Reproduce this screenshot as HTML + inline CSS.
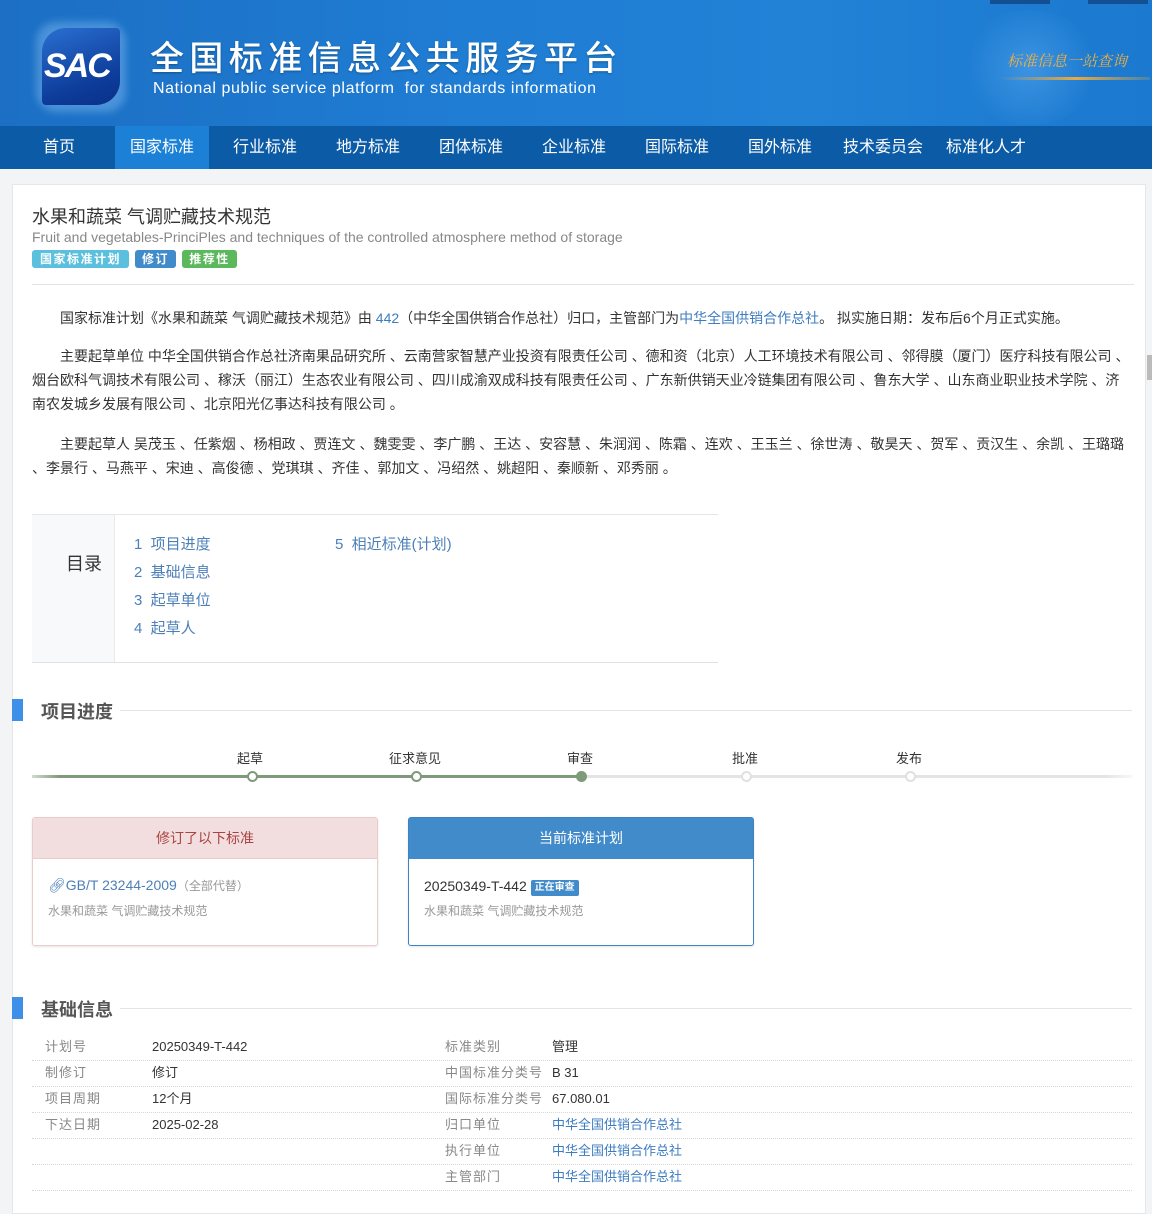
<!DOCTYPE html>
<html><head><meta charset="utf-8">
<style>
*{margin:0;padding:0;box-sizing:border-box}
body{width:1152px;height:1208px;overflow:hidden;background:#f3f4f5;font-family:"Liberation Sans","Noto Sans CJK SC",sans-serif;position:relative;color:#333}
.a{position:absolute;white-space:nowrap}
#hdr{position:absolute;left:0;top:0;width:1152px;height:126px;background:linear-gradient(90deg,#1c6fc4 0%,#1f7dd3 40%,#2182d6 70%,#1b79cf 100%)}
#nav{position:absolute;left:0;top:126px;width:1152px;height:43px;background:#0c5ba6}
#nav span{position:absolute;top:0;height:43px;line-height:43px;color:#fff;font-size:16px;text-align:center}
#panel{position:absolute;left:12px;top:184px;width:1134px;height:1030px;background:#fff;border:1px solid #e6e6e6}
.p{font-size:14px;color:#333}
.lk{color:#3d7cc0}
.tag{position:absolute;top:250px;height:18px;line-height:18px;font-size:12px;color:#fff;padding:0;text-align:center;white-space:nowrap;border-radius:3px;letter-spacing:1.5px;font-weight:bold}
.toc{font-size:15px;color:#4d80b8}
.sec{position:absolute;left:12px;width:11px;height:22px;background:#3d8fe8}
.st{font-size:18px;font-weight:bold;color:#555}
.hl{position:absolute;height:1px;background:#e4e4e4}
.step{font-size:13px;color:#333}
.dot{position:absolute;width:11px;height:11px;border-radius:50%;top:771px;background:#fff;border:2px solid #7f9a7a}
.row{position:absolute;left:32px;width:1100px;height:1px;border-top:1px dotted #d6d6d6}
.k{font-size:13px;color:#888;letter-spacing:1px;line-height:16px}
.v{font-size:13px;color:#333;line-height:16px}
</style></head><body>
<div id="hdr">
  <div style="position:absolute;left:990px;top:0;width:60px;height:4px;background:#124f93"></div>
  <div style="position:absolute;left:1088px;top:0;width:60px;height:4px;background:#124f93"></div>
  <div style="position:absolute;left:960px;top:10px;width:140px;height:115px;border-radius:50%;background:radial-gradient(circle,rgba(120,190,255,.35),rgba(30,120,210,0) 70%)"></div>
  <div class="a" style="left:1000px;top:77px;width:150px;height:3px;background:linear-gradient(90deg,rgba(230,170,60,0),#e8a940,rgba(230,170,60,.2))"></div>
  <div class="a" style="left:1007px;top:50px;font-size:15px;color:#f0b040;font-style:italic;font-family:'Noto Serif CJK SC',serif">标准信息一站查询</div>
  <div style="position:absolute;left:36px;top:22px;width:90px;height:90px;border-radius:20px;background:rgba(160,210,255,.35);filter:blur(4px)"></div>
  <div style="position:absolute;left:42px;top:28px;width:78px;height:77px;border-radius:24px 4px 24px 4px;background:linear-gradient(160deg,#2a6fd0,#0d3c9a 70%,#0a3088)"></div>
  <div class="a" style="left:44px;top:47px;font-size:34px;font-weight:900;font-style:italic;color:#fff;letter-spacing:-2px;font-family:'Liberation Sans',sans-serif">SAC</div>
  <div class="a" style="left:150px;top:31px;font-size:34px;color:#fff;letter-spacing:5.4px;font-family:'Noto Sans CJK SC',sans-serif;font-weight:500;text-shadow:0 1px 2px rgba(0,0,0,.3)">全国标准信息公共服务平台</div>
  <div class="a" style="left:153px;top:80px;font-size:16px;color:#fff;letter-spacing:.6px">National public service platform&nbsp; for standards information</div>
</div>
<div id="nav">
  <span style="left:0;width:118px">首页</span>
  <span style="left:115px;width:94px;background:#1b80d6">国家标准</span>
  <span style="left:218px;width:94px">行业标准</span>
  <span style="left:321px;width:94px">地方标准</span>
  <span style="left:424px;width:94px">团体标准</span>
  <span style="left:527px;width:94px">企业标准</span>
  <span style="left:630px;width:94px">国际标准</span>
  <span style="left:733px;width:94px">国外标准</span>
  <span style="left:836px;width:94px">技术委员会</span>
  <span style="left:939px;width:94px">标准化人才</span>
</div>
<div style="position:absolute;left:1147px;top:355px;width:5px;height:25px;background:#bbb"></div>
<div id="panel"></div>
<div class="a" style="left:32px;top:203px;font-size:18px;color:#333">水果和蔬菜 气调贮藏技术规范</div>
<div class="a" style="left:32px;top:229px;font-size:14px;color:#888">Fruit and vegetables-PrinciPles and techniques of the controlled atmosphere method of storage</div>
<div class="tag" style="left:32px;width:97px;background:#5bc0de">国家标准计划</div>
<div class="tag" style="left:135px;width:41px;background:#428bca">修订</div>
<div class="tag" style="left:182px;width:55px;background:#5cb85c">推荐性</div>
<div class="hl" style="left:32px;top:284px;width:1102px"></div>
<div class="a p" style="left:60px;top:308px">国家标准计划《水果和蔬菜 气调贮藏技术规范》由 <span class="lk">442</span>（中华全国供销合作总社）归口，主管部门为<span class="lk">中华全国供销合作总社</span>。 拟实施日期：发布后6个月正式实施。</div>
<div class="a p" style="left:60px;top:346px">主要起草单位 中华全国供销合作总社济南果品研究所 、云南营家智慧产业投资有限责任公司 、德和资（北京）人工环境技术有限公司 、邻得膜（厦门）医疗科技有限公司 、</div>
<div class="a p" style="left:32px;top:370px">烟台欧科气调技术有限公司 、稼沃（丽江）生态农业有限公司 、四川成渝双成科技有限责任公司 、广东新供销天业冷链集团有限公司 、鲁东大学 、山东商业职业技术学院 、济</div>
<div class="a p" style="left:32px;top:394px">南农发城乡发展有限公司 、北京阳光亿事达科技有限公司 。</div>
<div class="a p" style="left:60px;top:434px">主要起草人 吴茂玉 、任紫烟 、杨相政 、贾连文 、魏雯雯 、李广鹏 、王达 、安容慧 、朱润润 、陈霜 、连欢 、王玉兰 、徐世涛 、敬昊天 、贺军 、贡汉生 、余凯 、王璐璐</div>
<div class="a p" style="left:32px;top:458px">、李景行 、马燕平 、宋迪 、高俊德 、党琪琪 、齐佳 、郭加文 、冯绍然 、姚超阳 、秦顺新 、邓秀丽 。</div>
<div style="position:absolute;left:32px;top:514px;width:686px;height:149px;border-top:1px solid #e6e6e6;border-bottom:1px solid #e0e0e0"></div>
<div style="position:absolute;left:32px;top:515px;width:83px;height:147px;background:#f8f9fa;border-right:1px solid #eaeaea"></div>
<div class="a" style="left:66px;top:550px;font-size:18px;color:#333">目录</div>
<div class="a toc" style="left:134px;top:533px">1&nbsp; 项目进度</div>
<div class="a toc" style="left:134px;top:561px">2&nbsp; 基础信息</div>
<div class="a toc" style="left:134px;top:589px">3&nbsp; 起草单位</div>
<div class="a toc" style="left:134px;top:617px">4&nbsp; 起草人</div>
<div class="a toc" style="left:335px;top:533px">5&nbsp; 相近标准(计划)</div>
<div class="sec" style="top:699px"></div>
<div class="a st" style="left:41px;top:698px">项目进度</div>
<div class="hl" style="left:120px;top:710px;width:1012px"></div>
<div class="a step" style="left:237px;top:748px">起草</div>
<div class="a step" style="left:389px;top:748px">征求意见</div>
<div class="a step" style="left:567px;top:748px">审查</div>
<div class="a step" style="left:732px;top:748px">批准</div>
<div class="a step" style="left:896px;top:748px">发布</div>
<div style="position:absolute;left:32px;top:775px;width:550px;height:3px;background:linear-gradient(90deg,#d0dccd,#7f9a7a 5%)"></div>
<div style="position:absolute;left:582px;top:775px;width:550px;height:3px;background:linear-gradient(90deg,#e4e4e4 95%,#f7f7f7)"></div>
<div class="dot" style="left:247px"></div>
<div class="dot" style="left:411px"></div>
<div class="dot" style="left:576px;background:#7f9a7a"></div>
<div class="dot" style="left:741px;border-color:#e0e0e0"></div>
<div class="dot" style="left:905px;border-color:#e0e0e0"></div>
<div style="position:absolute;left:32px;top:817px;width:346px;height:129px;border:1px solid #ebcccc;border-radius:3px;box-shadow:0 1px 2px rgba(0,0,0,.1)">
  <div style="height:41px;background:#f2dede;border-bottom:1px solid #ebcccc;text-align:center;line-height:41px;font-size:14px;color:#a94442">修订了以下标准</div>
</div>
<div class="a" style="left:48px;top:877px;font-size:14px;color:#4d80b8">🔗︎GB/T 23244-2009<span style="color:#999;font-size:12px">（全部代替）</span></div>
<div class="a" style="left:48px;top:902px;font-size:12px;color:#999">水果和蔬菜 气调贮藏技术规范</div>
<div style="position:absolute;left:408px;top:817px;width:346px;height:129px;border:1px solid #3d82c4;border-radius:3px;box-shadow:0 1px 2px rgba(0,0,0,.1)">
  <div style="height:41px;background:#428bca;text-align:center;line-height:41px;font-size:14px;color:#fff">当前标准计划</div>
</div>
<div class="a" style="left:424px;top:878px;font-size:14px;color:#333">20250349-T-442 <span style="display:inline-block;background:#428bca;color:#fff;font-size:10px;font-weight:bold;padding:0 4px;line-height:16px;border-radius:2px;vertical-align:1px">正在审查</span></div>
<div class="a" style="left:424px;top:902px;font-size:12px;color:#999">水果和蔬菜 气调贮藏技术规范</div>
<div class="sec" style="top:997px"></div>
<div class="a st" style="left:41px;top:996px">基础信息</div>
<div class="hl" style="left:120px;top:1008px;width:1012px"></div>
<div class="a k" style="left:45px;top:1039px">计划号</div><div class="a v" style="left:152px;top:1039px">20250349-T-442</div>
<div class="a k" style="left:445px;top:1039px">标准类别</div><div class="a v" style="left:552px;top:1039px">管理</div>
<div class="row" style="top:1060px"></div>
<div class="a k" style="left:45px;top:1065px">制修订</div><div class="a v" style="left:152px;top:1065px">修订</div>
<div class="a k" style="left:445px;top:1065px">中国标准分类号</div><div class="a v" style="left:552px;top:1065px">B 31</div>
<div class="row" style="top:1086px"></div>
<div class="a k" style="left:45px;top:1091px">项目周期</div><div class="a v" style="left:152px;top:1091px">12个月</div>
<div class="a k" style="left:445px;top:1091px">国际标准分类号</div><div class="a v" style="left:552px;top:1091px">67.080.01</div>
<div class="row" style="top:1112px"></div>
<div class="a k" style="left:45px;top:1117px">下达日期</div><div class="a v" style="left:152px;top:1117px">2025-02-28</div>
<div class="a k" style="left:445px;top:1117px">归口单位</div><div class="a v" style="left:552px;top:1117px;color:#3d7cc0">中华全国供销合作总社</div>
<div class="row" style="top:1138px"></div>
<div class="a k" style="left:445px;top:1143px">执行单位</div><div class="a v" style="left:552px;top:1143px;color:#3d7cc0">中华全国供销合作总社</div>
<div class="row" style="top:1164px"></div>
<div class="a k" style="left:445px;top:1169px">主管部门</div><div class="a v" style="left:552px;top:1169px;color:#3d7cc0">中华全国供销合作总社</div>
<div class="row" style="top:1190px"></div>
</body></html>
